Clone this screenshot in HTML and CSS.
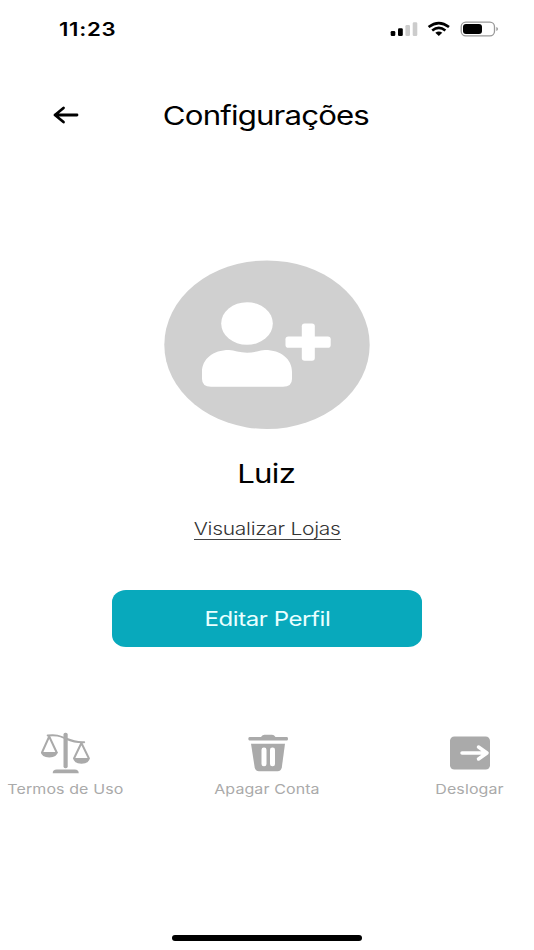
FILE: index.html
```html
<!DOCTYPE html>
<html lang="pt-BR">
<head>
<meta charset="utf-8">
<meta name="viewport" content="width=device-width, initial-scale=1">
<title>Configurações</title>
<link rel="stylesheet" href="styles.css">
</head>
<body>
<div class="status">
  <span class="wide clock">11:23</span>
  <svg class="indicators" width="110" height="20" viewBox="0 0 110 20">
    <rect x="0.7" y="11" width="4.6" height="5" rx="1.3"/>
    <rect x="8" y="8.2" width="4.8" height="7.8" rx="1.3"/>
    <rect class="off" x="15.4" y="5" width="4.6" height="11" rx="1.3"/>
    <rect class="off" x="22.7" y="2.2" width="4.6" height="13.8" rx="1.3"/>
    <g class="wifi">
      <path d="M38.6 7.1Q48.8-1 59 7.1"/>
      <path d="M42.2 10.5Q48.8 5.2 55.4 10.5"/>
      <path class="dot" d="M45.3 12.7Q48.8 10.3 52.3 12.7L48.8 15.9Z"/>
    </g>
    <rect class="cell" x="71.2" y="2.1" width="33.3" height="13.7" rx="4.6"/>
    <rect x="73" y="4" width="19" height="10" rx="3"/>
    <path class="tip" d="M106.3 7Q108 7.5 108 9Q108 10.500 106.300 11Z"/>
  </svg>
</div>

<header class="header">
  <svg class="back" width="26" height="18" viewBox="0 0 26 18"><path d="M24 9H2M10.500 2L2 9L10.500 16"/></svg>
  <h1 class="wide title">Configurações</h1>
</header>

<main class="profile">
  <svg class="avatar" width="206" height="170" viewBox="0 0 206 170">
    <ellipse class="disc" cx="103" cy="84.700" rx="102.700" ry="84.300"/>
    <ellipse cx="83" cy="63.500" rx="25.800" ry="21.300"/>
    <path d="M38 112C38 99 49 90 65 90Q69 90 73 91.500Q83 93.800 93 91.500Q97 90 101 90C117 90 128 99 128 112V119Q128 126.700 119 126.700H47Q38 126.700 38 119Z"/>
    <rect x="137.800" y="63.400" width="13" height="37.400" rx="2.800"/>
    <rect x="121.500" y="76.500" width="45.200" height="11.200" rx="2.800"/>
  </svg>
  <h2 class="wide name">Luiz</h2>
  <a class="stores"><span class="wide stores-label">Visualizar Lojas</span></a>
  <button class="edit"><span class="wide edit-label">Editar Perfil</span></button>
</main>

<nav class="actions">
  <div class="action">
    <svg width="50" height="42" viewBox="-0.7 0 50 42">
      <g class="beam"><path d="M7 3.500C16 2.500 19 4 25 6.500S36 10.800 43.500 10.200"/><path d="M8.500 4.500L1.300 20.500M8.500 4.500L16 20.500M40.700 11L33.500 26M40.700 11L48 26"/></g>
      <path d="M0.200 20H17Q16.500 25.400 8.600 25.400T0.200 20ZM32.300 26H49.200Q48.500 31.700 40.800 31.700T32.300 26Z"/>
      <rect x="22.800" y="0.800" width="4.200" height="35.500" rx="1.800"/>
      <path d="M12 41.200Q12 37.500 16 37.500H34Q38 37.500 38 41.200Z"/>
    </svg>
    <span class="wide">Termos de Uso</span>
  </div>
  <div class="action">
    <svg width="40" height="42" viewBox="0 0 40 42">
      <path d="M1.500 5H13Q14.500 2.800 16.500 2.800H24Q26 2.800 27.500 5H39Q40 5 40 6.800T39 8.500H1.500Q0.300 8.500 0.300 6.800T1.500 5Z"/>
      <path d="M3 11.800H37L33.800 35.500Q33.100 39.200 29.500 39.200H11Q7.400 39.200 6.700 35.500Z"/>
      <rect class="cut" x="13.500" y="15.400" width="5" height="18.800" rx="2.300"/>
      <rect class="cut" x="22" y="15.400" width="5" height="18.800" rx="2.300"/>
    </svg>
    <span class="wide nudge">Apagar Conta</span>
  </div>
  <div class="action">
    <svg width="42" height="42" viewBox="0 0 42 42">
      <rect x="1" y="4.500" width="40" height="33" rx="4.300"/>
      <path class="arrow" d="M13 21H38M29.500 15L38 21L29.500 27"/>
    </svg>
    <span class="wide nudge">Deslogar</span>
  </div>
</nav>
<div class="home"></div>
</body>
</html>
```
FILE: styles.css
```css
* { box-sizing: border-box; }
body {
  margin: 0;
  width: 534px;
  height: 950px;
  overflow: hidden;
  display: flex;
  flex-direction: column;
  background: #fff;
  color: #000;
  font-family: Inter, "Liberation Sans", sans-serif;
}
svg { display: block; }
h1, h2 { margin: 0; font-weight: 400; }

/* Letterforms are drawn wider than they are tall */
.wide { display: inline-block; white-space: nowrap; transform: scaleX(1.2); }

.status {
  height: 58px;
  padding: 0 34px 0 59px;
  display: flex;
  align-items: center;
  justify-content: space-between;
}
.clock { font-size: 18.5px; font-weight: 600; letter-spacing: 0.6px; transform-origin: left; }
.indicators { margin-top: 2px; }
.off { fill: #ccc; }
.wifi path { fill: none; stroke: #000; stroke-width: 2.6; }
.wifi .dot { fill: #000; stroke: none; }
.cell { fill: none; stroke: #999; stroke-width: 1.3; }
.tip { fill: #999; }

.header {
  height: 114px;
  padding: 0 53px;
  display: grid;
  grid-template-columns: 26px 1fr 26px;
  align-items: center;
}
.back { fill: none; stroke: #000; stroke-width: 2.8; stroke-linecap: round; stroke-linejoin: round; }
.title { justify-self: center; margin: 2px 2px 0 0; font-size: 26px; line-height: 32px; letter-spacing: -0.7px; }

.profile { margin-top: 88px; display: flex; flex-direction: column; align-items: center; }
.avatar { fill: #fff; }
.disc { fill: #d0d0d0; }
.name { margin: 28px 2px 0 0; font-size: 26px; line-height: 32px; letter-spacing: -0.6px; }
.stores {
  margin-top: 26px;
  width: 147px;
  height: 24px;
  display: flex;
  justify-content: center;
  border-bottom: 1px solid #444;
  color: #333;
}
.stores-label { font-size: 17.5px; line-height: 25px; font-weight: 300; letter-spacing: -0.25px; }
.edit {
  margin-top: 50px;
  width: 310px;
  height: 57px;
  padding: 0;
  border: 0;
  border-radius: 14px / 12px;
  background: #08a9bc;
  color: #eaffff;
  font: 400 20px/24px Inter, "Liberation Sans", sans-serif;
}
.edit-label { letter-spacing: -0.35px; }

.actions {
  margin-top: 85px;
  padding: 0 3px 0 4px;
  display: flex;
  justify-content: space-between;
  color: #aaa;
}
.action { width: 122px; display: flex; flex-direction: column; align-items: center; }
.action svg { fill: #aaa; }
.action .wide { margin-top: 6px; font-size: 13.3px; line-height: 18px; letter-spacing: 0.1px; }
.action .nudge { margin-right: 2px; }
.beam { fill: none; stroke: #aaa; stroke-width: 2; stroke-linecap: round; }
.action .cut { fill: #fff; }
.arrow { fill: none; stroke: #fff; stroke-width: 3.5; stroke-linecap: round; stroke-linejoin: round; }

.home { width: 190px; height: 6px; margin: auto auto 9px; border-radius: 3px; background: #000; }
```
